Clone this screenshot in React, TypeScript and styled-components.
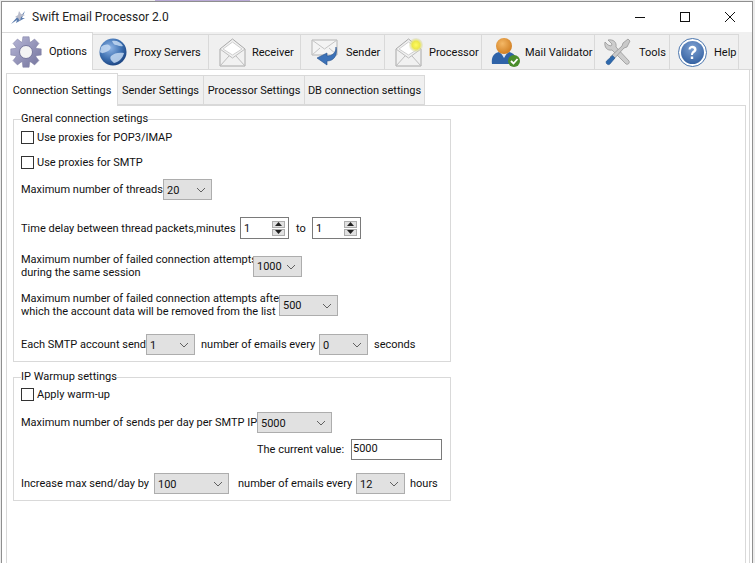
import React from "react";
import styled, { createGlobalStyle } from "styled-components";

const Global = createGlobalStyle`
  html, body { margin: 0; padding: 0; background: #fff; }
  body { width: 755px; height: 563px; overflow: hidden; font-family: Roboto, "Noto Sans", sans-serif; font-size: 11px; color: #111; }
  * { box-sizing: border-box; }
`;

const Desktop = styled.div`
  width: 755px; height: 563px; padding: 1px 2px 0 1px; overflow: hidden;
  background: linear-gradient(90deg, #ececec 0 155px, #b9a9d6 155px 250px, #ececec 250px);
`;
const Win = styled.div`
  height: 100%; background: #fff; border-left: 1px solid #8f8f8f; border-top: 1px solid #8f8f8f; border-right: 1px solid #8f8f8f;
  display: flex; flex-direction: column;
`;
const TitleBar = styled.div`
  height: 30px; display: flex; align-items: center; padding-left: 8px; font-size: 12px; color: #222; flex: none;
`;
const TitleText = styled.span`margin-left: 5px;`;
const Grow = styled.div`flex: 1;`;
const WinBtn = styled.button`
  width: 45px; height: 29px; border: 0; background: none; padding: 0; display: flex; align-items: center; justify-content: center;
`;
const MainTabs = styled.div`
  height: 38px; background: #f0f0f0; display: flex; align-items: flex-end; border-bottom: 1px solid #d9d9d9; flex: none;
`;
const MainTab = styled.div<{ $w: number; $pad: number; $gap: number; $active?: boolean }>`
  width: ${p => p.$w}px;
  height: ${p => (p.$active ? 38 : 35)}px;
  margin-bottom: ${p => (p.$active ? -1 : 0)}px;
  background: ${p => (p.$active ? "#fff" : "#f0f0f0")};
  border-right: 1px solid #d9d9d9;
  border-top: 1px solid #d9d9d9;
  display: flex; align-items: center; gap: ${p => p.$gap}px; padding-left: ${p => p.$pad}px; color: #111;
  white-space: nowrap; flex: none; position: relative;
`;
const Body = styled.div`
  flex: 1; padding: 3px 3px 0 4px; margin-right: 2px; border-right: 1px solid #d9d9d9; display: flex; flex-direction: column; min-height: 0;
`;
const SubTabs = styled.div`display: flex; align-items: flex-end; height: 32px; flex: none;`;
const SubTab = styled.div<{ $w: number; $active?: boolean }>`
  width: ${p => p.$w}px;
  height: ${p => (p.$active ? 33 : 30)}px;
  margin-bottom: ${p => (p.$active ? -1 : 0)}px;
  background: ${p => (p.$active ? "#fff" : "#f0f0f0")};
  border: 1px solid #d9d9d9; border-left-width: ${p => (p.$active ? 1 : 0)}px;
  border-bottom: ${p => (p.$active ? 0 : 1)}px solid #d9d9d9;
  display: flex; align-items: center; justify-content: center; white-space: nowrap; position: relative; z-index: ${p => (p.$active ? 1 : 0)};
`;
const Panel = styled.div`
  flex: 1; border: 1px solid #d9d9d9; border-bottom: 0; padding: 6px 0 0 6px; display: flex; flex-direction: column; gap: 8px;
`;
const Group = styled.fieldset<{ $h: number }>`
  width: 438px; height: ${p => p.$h}px; margin: 0; padding: 0 0 0 7px; border: 1px solid #d9d9d9; min-width: 0; flex: none;
`;
const Legend = styled.legend`
  padding: 0; line-height: 14px; height: 14px;
`;
const Row = styled.div<{ $top: number; $left?: number }>`
  display: flex; align-items: center; margin-top: ${p => p.$top}px; margin-left: ${p => p.$left ?? 0}px; white-space: nowrap;
`;
const Check = styled.span`
  width: 13px; height: 13px; border: 1px solid #333; background: #fff; margin-right: 3px; flex: none;
`;
const Label = styled.span<{ $w?: number; $ml?: number }>`
  width: ${p => (p.$w ? `${p.$w}px` : "auto")}; margin-left: ${p => p.$ml ?? 0}px; line-height: 13px; flex: none;
`;
const SelectBox = styled.div<{ $w: number }>`
  width: ${p => p.$w}px; height: 21px; background: #e1e1e1; border: 1px solid #adadad; flex: none;
  display: flex; align-items: center; justify-content: space-between; padding: 1px 5px 0 3px;
`;
const Spin = styled.div`
  width: 49px; height: 22px; border: 1px solid #7a7a7a; background: #fff; flex: none;
  display: flex; align-items: center; justify-content: space-between; padding: 0 3px 0 3px;
`;
const SpinBtns = styled.div`display: flex; flex-direction: column; gap: 1px;`;
const SpinBtn = styled.div`
  width: 13px; height: 7px; background: #e1e1e1; border: 1px solid #adadad; display: flex; align-items: center; justify-content: center;
`;
const TextBox = styled.div`
  width: 91px; height: 21px; border: 1px solid #7a7a7a; background: #fff; padding: 0 1px 2px; display: flex; align-items: center; flex: none;
`;

const Chevron = () => (
  <svg width="10" height="6" viewBox="0 0 10 6" fill="none"><path d="M1 1l4 4 4-4" stroke="#606060" strokeWidth="1" /></svg>
);
const Select = ({ w, v }: { w: number; v: string }) => (
  <SelectBox $w={w}><span>{v}</span><Chevron /></SelectBox>
);
const Spinner = ({ v }: { v: string }) => (
  <Spin>
    <span>{v}</span>
    <SpinBtns>
      <SpinBtn><svg width="7" height="4" viewBox="0 0 7 4"><path d="M3.5 0L7 4H0z" fill="#222" /></svg></SpinBtn>
      <SpinBtn><svg width="7" height="4" viewBox="0 0 7 4"><path d="M0 0h7L3.5 4z" fill="#222" /></svg></SpinBtn>
    </SpinBtns>
  </Spin>
);

const gearPath = (() => {
  const n = 8, cx = 16, cy = 16, r1 = 15.5, r2 = 11;
  let d = "";
  for (let i = 0; i < n; i++) {
    const a = (i * 2 * Math.PI) / n - Math.PI / 2;
    const w = 0.2, g = 0.34;
    const pts = [[r2, a - g], [r1, a - w], [r1, a + w], [r2, a + g]];
    pts.forEach(([r, t], j) => {
      d += `${i === 0 && j === 0 ? "M" : "L"}${(cx + r * Math.cos(t)).toFixed(2)} ${(cy + r * Math.sin(t)).toFixed(2)}`;
    });
  }
  return d + "Z";
})();

const GearIcon = () => (
  <svg width="32" height="32" viewBox="0 0 32 32" style={{ flex: "none" }}>
    <defs><linearGradient id="g1" x1="0" y1="0" x2="1" y2="1"><stop offset="0" stopColor="#b8b8d8" /><stop offset="1" stopColor="#73739c" /></linearGradient></defs>
    <path d={gearPath} fill="url(#g1)" stroke="#8585a8" strokeWidth=".6" />
    <circle cx="16" cy="16" r="6.5" fill="#f4f4f4" stroke="#76769c" strokeWidth="1" />
  </svg>
);
const GlobeIcon = () => (
  <svg width="28" height="28" viewBox="0 0 28 28" style={{ flex: "none" }}>
    <defs><radialGradient id="g2" cx=".4" cy=".35" r=".7"><stop offset="0" stopColor="#8fb5e6" /><stop offset=".6" stopColor="#3c6fb0" /><stop offset="1" stopColor="#173f7c" /></radialGradient></defs>
    <circle cx="14" cy="14" r="13.5" fill="url(#g2)" />
    <path d="M2 9c4-3 7-3 9-1s-1 5-4 6-4 2-6 0zM13 3c4-1 9 1 11 5-3 1-5-1-7-1s-3-2-4-4zM12 18c3-3 8-4 13-3-1 5-5 9-10 10-2-2-5-4-3-7z" fill="#c4d9f2" opacity=".85" />
  </svg>
);
const Envelope = () => (
  <>
    <path d="M1 11L13.5 1 26 11v17H1z" fill="#f1f1f1" stroke="#a8a8a8" />
    <path d="M4 11L13.5 4 23 11 13.5 17z" fill="#fff" stroke="#cfcfcf" />
    <path d="M1 11l12.500 9L26 11M1 28l9-10M26 28l-9-10" fill="none" stroke="#bdbdbd" />
  </>
);
const ReceiverIcon = () => (
  <svg width="27" height="29" viewBox="0 0 27 29" style={{ flex: "none" }}><Envelope /></svg>
);
const SenderIcon = () => (
  <svg width="28" height="28" viewBox="0 0 28 28" style={{ flex: "none" }}>
    <path d="M1 2h25v15H1z" fill="#f4f4f4" stroke="#b4b4b4" />
    <path d="M1 2l12.500 9L26 2M1 17l8-7M26 17l-8-7" fill="none" stroke="#c4c4c4" />
    <path d="M25 9c0 6-4 9-9 9v-3L6 20l10 7v-4c7 0 11-6 9-14z" fill="#3c72b8" stroke="#234f8c" strokeWidth=".6" />
  </svg>
);
const ProcessorIcon = () => (
  <svg width="28" height="30" viewBox="0 0 28 30" style={{ flex: "none" }}>
    <defs><radialGradient id="g3"><stop offset="0" stopColor="#fffb60" /><stop offset=".55" stopColor="#ece84a" /><stop offset="1" stopColor="#d8d8c0" stopOpacity=".4" /></radialGradient></defs>
    <g transform="translate(0 1)"><Envelope /></g>
    <circle cx="21" cy="8" r="7" fill="url(#g3)" />
  </svg>
);
const UserIcon = () => (
  <svg width="30" height="30" viewBox="0 0 30 30" style={{ flex: "none" }}>
    <defs><radialGradient id="g4" cx=".4" cy=".35" r=".7"><stop offset="0" stopColor="#f4b866" /><stop offset="1" stopColor="#cf7c1f" /></radialGradient></defs>
    <path d="M1 27c-1-7 2-11 7-12l5 4 5-4c5 1 7 4 7 9l-2 3z" fill="#2f63a8" />
    <path d="M10 16l3 5 3-5z" fill="#dfe8f3" />
    <circle cx="13" cy="9" r="8" fill="url(#g4)" />
    <circle cx="23" cy="24" r="6" fill="#4a8d2b" />
    <path d="M20 24l2.500 2.500 4-4.500" stroke="#fff" strokeWidth="1.800" fill="none" />
  </svg>
);
const ToolsIcon = () => (
  <svg width="28" height="28" viewBox="0 0 28 28" style={{ flex: "none" }}>
    <path d="M4 2l4 4-1 2-3-1-3-3c-1 5 2 9 7 8l14 14c2 1 4-1 3-3L12 9c1-5-3-8-8-7z" fill="#cdcdcd" stroke="#8e8e8e" strokeWidth=".7" />
    <path d="M26 3l-2-2-5 4-1 3L6 19l3 3L20 10l3-1z" fill="#c9c9c9" stroke="#8e8e8e" strokeWidth=".7" />
    <path d="M8.500 17.500l2.500 2.500-5 6c-2 2-5-1-3.500-3z" fill="#2e69ad" stroke="#1d4a82" strokeWidth=".5" />
  </svg>
);
const HelpIcon = () => (
  <svg width="29" height="29" viewBox="0 0 29 29" style={{ flex: "none" }}>
    <defs><radialGradient id="g5" cx=".5" cy=".3" r=".8"><stop offset="0" stopColor="#7ea1d2" /><stop offset="1" stopColor="#2c5a9c" /></radialGradient></defs>
    <circle cx="14.500" cy="14.500" r="14" fill="#fff" stroke="#4a75ad" />
    <circle cx="14.500" cy="14.500" r="11.500" fill="url(#g5)" />
    <path d="M10.500 11.500c0-5 8-5 8 0 0 3-3.500 3-3.500 5.500h-2c0-4 3-4 3-5.500s-3.500-2-3.500 0zM12.800 18.500h2.400V21h-2.400z" fill="#fff" />
  </svg>
);
const AppIcon = () => (
  <svg width="17" height="15" viewBox="0 0 17 15" style={{ flex: "none" }}>
    <path d="M1 14L9 5l1 2 5-6-3 7 3 0-9 5 1-3z" fill="#5b7cae" />
    <path d="M9 1l2 3 4 1-4 2-1 4-2-3-3-1 3-2z" fill="#b9bccb" />
  </svg>
);

export default function App() {
  return (
    <Desktop>
      <Global />
      <Win>
        <TitleBar>
          <AppIcon />
          <TitleText>Swift Email Processor 2.0</TitleText>
          <Grow />
          <WinBtn><svg width="10" height="1"><rect width="10" height="1" fill="#111" /></svg></WinBtn>
          <WinBtn><svg width="10" height="10"><rect x=".5" y=".5" width="9" height="9" fill="none" stroke="#111" /></svg></WinBtn>
          <WinBtn><svg width="10" height="10"><path d="M0 0l10 10M10 0L0 10" stroke="#111" /></svg></WinBtn>
        </TitleBar>
        <MainTabs>
          <MainTab $w={91} $pad={8} $gap={7} $active><GearIcon /><span>Options</span></MainTab>
          <MainTab $w={116} $pad={6} $gap={7}><GlobeIcon /><span>Proxy Servers</span></MainTab>
          <MainTab $w={92} $pad={10} $gap={6}><ReceiverIcon /><span>Receiver</span></MainTab>
          <MainTab $w={84} $pad={10} $gap={7}><SenderIcon /><span>Sender</span></MainTab>
          <MainTab $w={97} $pad={10} $gap={6}><ProcessorIcon /><span>Processor</span></MainTab>
          <MainTab $w={113} $pad={9} $gap={4}><UserIcon /><span>Mail Validator</span></MainTab>
          <MainTab $w={75} $pad={9} $gap={7}><ToolsIcon /><span>Tools</span></MainTab>
          <MainTab $w={69} $pad={8} $gap={7}><HelpIcon /><span>Help</span></MainTab>
        </MainTabs>
        <Body>
          <SubTabs>
            <SubTab $w={112} $active>Connection Settings</SubTab>
            <SubTab $w={86}>Sender Settings</SubTab>
            <SubTab $w={101}>Processor Settings</SubTab>
            <SubTab $w={120}>DB connection settings</SubTab>
          </SubTabs>
          <Panel>
            <Group $h={250}>
              <Legend>Gneral connection setings</Legend>
              <Row $top={5}><Check /><Label>Use proxies for POP3/IMAP</Label></Row>
              <Row $top={12}><Check /><Label>Use proxies for SMTP</Label></Row>
              <Row $top={10}><Label $w={142}>Maximum number of threads</Label><Select w={49} v="20" /></Row>
              <Row $top={17}><Label $w={219}>Time delay between thread packets,minutes</Label><Spinner v="1" /><Label $ml={7} $w={16}>to</Label><Spinner v="1" /></Row>
              <Row $top={14}><Label $w={232}>Maximum number of failed connection attempts<br />during the same session</Label><Select w={49} v="1000" /></Row>
              <Row $top={13}><Label $w={258}>Maximum number of failed connection attempts after<br />which the account data will be removed from the list</Label><Select w={59} v="500" /></Row>
              <Row $top={16}><Label $w={125}>Each SMTP account send</Label><Select w={49} v="1" /><Label $ml={6} $w={118}>number of emails every</Label><Select w={49} v="0" /><Label $ml={6}>seconds</Label></Row>
            </Group>
            <Group $h={131}>
              <Legend>IP Warmup settings</Legend>
              <Row $top={4}><Check /><Label>Apply warm-up</Label></Row>
              <Row $top={11}><Label $w={236}>Maximum number of sends per day per SMTP IP:</Label><Select w={75} v="5000" /></Row>
              <Row $top={6} $left={236}><Label $w={94}>The current value:</Label><TextBox>5000</TextBox></Row>
              <Row $top={13}><Label $w={133}>Increase max send/day by</Label><Select w={75} v="100" /><Label $ml={9} $w={118}>number of emails every</Label><Select w={49} v="12" /><Label $ml={5}>hours</Label></Row>
            </Group>
          </Panel>
        </Body>
      </Win>
    </Desktop>
  );
}
